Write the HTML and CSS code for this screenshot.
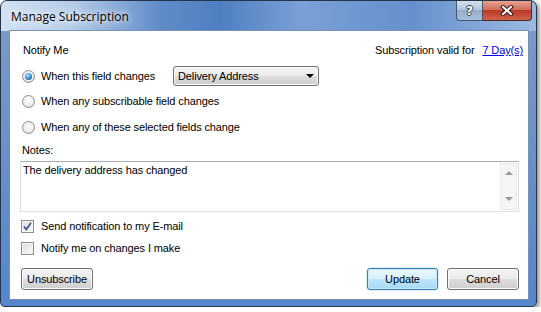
FILE: index.html
```html
<!DOCTYPE html>
<html>

<head>
    <title>Manage Subscription</title>
    <link rel="stylesheet" href="styles.css">
</head>

<body>
    <div class="window">
        <div class="titlebar">
            <span class="title">Manage Subscription</span>
            <div class="caption-buttons">
                <div class="cap-btn help">?</div>
                <div class="cap-btn close">
                    <svg width="14" height="11" viewBox="0 0 14 11">
                        <path d="M3 2 L11 9 M11 2 L3 9" stroke="#3b1f1a" stroke-width="4.2" stroke-linecap="square" fill="none" />
                        <path d="M3 2 L11 9 M11 2 L3 9" stroke="#ffffff" stroke-width="2" stroke-linecap="square" fill="none" />
                    </svg>
                </div>
            </div>
        </div>
        <div class="client">
            <div class="top-row">
                <span class="notify">Notify Me</span>
                <span class="valid">Subscription valid for <a href="#">7 Day(s)</a></span>
            </div>
            <div class="option first">
                <span class="radio checked"></span>
                <span class="option-label field">When this field changes</span>
                <div class="select">Delivery Address<span class="arrow"></span></div>
            </div>
            <div class="option second">
                <span class="radio"></span>
                <span class="option-label">When any subscribable field changes</span>
            </div>
            <div class="option third">
                <span class="radio"></span>
                <span class="option-label">When any of these selected fields change</span>
            </div>
            <div class="notes-label">Notes:</div>
            <div class="notes">
                <div class="notes-text">The delivery address has changed</div>
                <div class="scrollbar">
                    <span class="arrow-up"></span>
                    <span class="arrow-down"></span>
                </div>
            </div>
            <div class="check-row">
                <span class="check checked">
                    <svg width="9" height="9" viewBox="0 0 9 9">
                        <path d="M1 4.5 L3.3 7.5 L8 0.8" stroke="#3d5a9e" stroke-width="1.8" fill="none" />
                    </svg>
                </span>
                <span class="check-label">Send notification to my E-mail</span>
            </div>
            <div class="check-row">
                <span class="check"></span>
                <span class="check-label">Notify me on changes I make</span>
            </div>
            <div class="buttons">
                <button class="btn unsubscribe">Unsubscribe</button>
                <button class="btn default update">Update</button>
                <button class="btn cancel">Cancel</button>
            </div>
        </div>
    </div>
</body>

</html>
```

FILE: styles.css
```css
* {
    box-sizing: border-box;
}

body {
    margin: 0;
    background-color: #ffffff;
    font-family: "Liberation Sans", Arial, sans-serif;
    font-size: 11px;
    letter-spacing: -0.12px;
    color: #000000;
}

.window {
    display: flex;
    flex-direction: column;
    width: 537px;
    height: 307px;
    padding: 0 7px 6px 8px;
    border: 1px solid #26344a;
    border-radius: 7px 7px 5px 5px;
    background:
        linear-gradient(90deg, #d2e1f2 0, #b6cde9 70px, #5f8bc8 160px, #4f7fc2 220px, #7aa0d6 300px, #6590cd 410px, #9ab8e1 530px) top / 100% 30px no-repeat,
        linear-gradient(180deg, #7e9cc6 0, #6a90c6 150px, #5586ce 100%);
    box-shadow: 2px 2px 5px rgba(0, 0, 0, 0.5);
}

/* title bar */
.titlebar {
    display: flex;
    height: 29px;
    margin: 0 -7px 0 -8px;
    padding-left: 10px;
}

.title {
    align-self: center;
    padding-top: 2px;
    font-family: "Open Sans", "Noto Sans", sans-serif;
    font-size: 12px;
    letter-spacing: 0;
    color: #000000;
    text-shadow: 0 0 6px #ffffff, 0 0 10px #ffffff;
}

.caption-buttons {
    display: flex;
    margin-left: auto;
    margin-right: 4px;
    height: 20px;
}

.cap-btn {
    display: flex;
    align-items: center;
    justify-content: center;
    height: 20px;
    border: 1px solid #43556f;
    border-top: none;
}

.help {
    width: 27px;
    border-radius: 0 0 0 4px;
    background: linear-gradient(180deg, #d4e0ee 0, #b3c6de 45%, #95acca 50%, #a7bfdd 100%);
    font-family: "DejaVu Sans", sans-serif;
    font-weight: bold;
    font-size: 12px;
    color: #ffffff;
    text-shadow: 1px 0 0 #3a4356, -1px 0 0 #3a4356, 0 1px 0 #3a4356, 0 -1px 0 #3a4356;
}

.close {
    width: 49px;
    border-left: none;
    border-color: #4b2822;
    border-radius: 0 0 4px 0;
    background: linear-gradient(180deg, #e7a192 0, #d2705c 45%, #bd3a25 50%, #cf624b 100%);
}

/* client area */
.client {
    display: flex;
    flex-direction: column;
    height: 270px;
    padding: 11px 9px 0 11px;
    border: 1px solid #7a92b2;
    background-color: #ffffff;
}

.top-row {
    display: flex;
    justify-content: space-between;
    align-items: center;
    height: 16px;
    margin-right: -4px;
}

.notify {
    margin-left: 2px;
}

.valid a {
    margin-left: 5px;
    color: #0000ee;
}

.option {
    display: flex;
    align-items: center;
    height: 16px;
}

.option.first {
    height: 20px;
    margin-top: 8px;
}

.option.second {
    margin-top: 7px;
}

.option.third {
    margin-top: 10px;
}

.radio {
    position: relative;
    width: 13px;
    height: 13px;
    margin-left: 1px;
    border: 1px solid #8e8f8f;
    border-radius: 50%;
    background: radial-gradient(circle at 50% 40%, #ffffff 0, #ececec 55%, #cfcfcf 100%);
}

.radio.checked::after {
    content: "";
    position: absolute;
    left: 2px;
    top: 2px;
    width: 7px;
    height: 7px;
    border-radius: 50%;
    background: radial-gradient(circle at 40% 35%, #c4ecff 0, #3f97da 45%, #134a88 100%);
}

.option-label {
    margin-left: 6px;
}

.option-label.field {
    width: 132px;
}

.select {
    display: flex;
    align-items: center;
    width: 146px;
    height: 20px;
    padding-left: 4px;
    border: 1px solid #707070;
    border-radius: 3px;
    background: linear-gradient(180deg, #f3f3f3 0, #ebebeb 50%, #dddddd 50%, #cfcfcf 100%);
    box-shadow: inset 0 0 0 1px #fbfbfb;
}

.select .arrow {
    width: 0;
    height: 0;
    margin-left: auto;
    margin-right: 4px;
    border-left: 4px solid transparent;
    border-right: 4px solid transparent;
    border-top: 4px solid #000000;
}

.notes-label {
    height: 16px;
    margin-top: 7px;
    margin-left: 1px;
    line-height: 16px;
}

.notes {
    display: flex;
    height: 51px;
    margin-top: 3px;
    margin-left: -1px;
    border: 1px solid #dbdfe6;
    border-top-color: #abadb3;
}

.notes-text {
    flex: 1;
    padding: 1px 2px;
    line-height: 14px;
}

.scrollbar {
    display: flex;
    flex-direction: column;
    justify-content: space-between;
    align-items: center;
    width: 17px;
    margin: 1px;
    padding: 7px 0 8px;
    border: 1px solid #e8e8e8;
    background-color: #f5f5f5;
}

.arrow-up,
.arrow-down {
    width: 0;
    height: 0;
    border-left: 4px solid transparent;
    border-right: 4px solid transparent;
}

.arrow-up {
    border-bottom: 4px solid #9a9a9a;
}

.arrow-down {
    border-top: 4px solid #9a9a9a;
}

.check-row {
    display: flex;
    align-items: center;
    height: 16px;
    margin-top: 6px;
}

.check {
    display: flex;
    align-items: center;
    justify-content: center;
    width: 13px;
    height: 13px;
    border: 1px solid #8e8f8f;
    background: linear-gradient(135deg, #d8d8d8 0, #f0f0f0 60%, #fbfbfb 100%);
    box-shadow: inset 0 0 0 1px #f6f6f6;
}

.check-label {
    margin-left: 7px;
}

.buttons {
    display: flex;
    gap: 9px;
    height: 22px;
    margin-top: 12px;
}

.btn {
    height: 22px;
    padding: 0;
    border: 1px solid #707070;
    border-radius: 3px;
    background: linear-gradient(180deg, #f3f3f3 0, #ebebeb 50%, #dddddd 50%, #cfcfcf 100%);
    box-shadow: inset 0 0 0 1px #fbfbfb;
    font-family: "Liberation Sans", Arial, sans-serif;
    font-size: 11px;
    letter-spacing: -0.12px;
    color: #000000;
}

.unsubscribe {
    width: 72px;
}

.update {
    width: 71px;
    margin-left: auto;
}

.cancel {
    width: 72px;
}

.btn.default {
    border-color: #3c7fb1;
    background: linear-gradient(180deg, #eaf6fd 0, #d9f0fc 50%, #bee6fd 50%, #a7d9f5 100%);
    box-shadow: inset 0 0 0 1px #c5e9fb, 0 0 2px #7fc4ec;
}
```
